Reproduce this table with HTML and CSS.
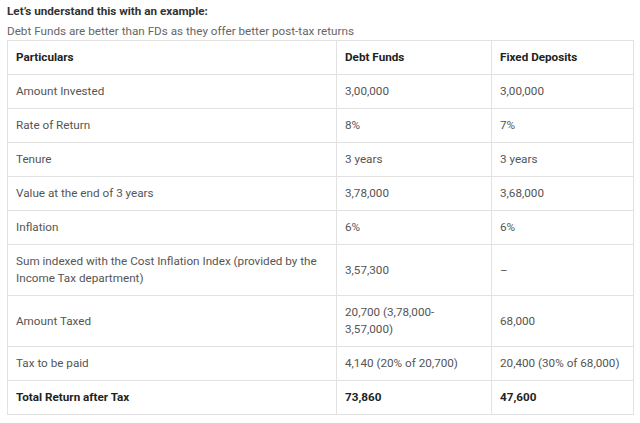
FILE: index.html
```html
<!DOCTYPE html>
<html>
<head>
<meta charset="utf-8">
<link rel="stylesheet" href="styles.css">
</head>
<body>
<div class="page">
  <p class="heading">Let’s understand this with an example:</p>
  <p class="sub">Debt Funds are better than FDs as they offer better post-tax returns</p>
  <table class="compare">
    <colgroup>
      <col class="c1"><col class="c2"><col class="c3">
    </colgroup>
    <tr class="head"><td>Particulars</td><td>Debt Funds</td><td>Fixed Deposits</td></tr>
    <tr><td>Amount Invested</td><td>3,00,000</td><td>3,00,000</td></tr>
    <tr><td>Rate of Return</td><td>8%</td><td>7%</td></tr>
    <tr><td>Tenure</td><td>3 years</td><td>3 years</td></tr>
    <tr><td>Value at the end of 3 years</td><td>3,78,000</td><td>3,68,000</td></tr>
    <tr><td>Inflation</td><td>6%</td><td>6%</td></tr>
    <tr><td>Sum indexed with the Cost Inflation Index (provided by the Income Tax department)</td><td>3,57,300</td><td>–</td></tr>
    <tr><td>Amount Taxed</td><td>20,700 (3,78,000-<br>3,57,000)</td><td>68,000</td></tr>
    <tr><td>Tax to be paid</td><td>4,140 (20% of 20,700)</td><td>20,400 (30% of 68,000)</td></tr>
    <tr class="head"><td>Total Return after Tax</td><td>73,860</td><td>47,600</td></tr>
  </table>
</div>
</body>
</html>
```
FILE: styles.css
```css
html, body {
  margin: 0;
  padding: 0;
  background: #ffffff;
}
.page {
  padding: 3px 7px 0 7px;
  font-family: Roboto, "Liberation Sans", sans-serif;
  font-size: 11.7px;
  line-height: 17px;
  color: #555555;
}
.heading {
  margin: 0;
  font-weight: bold;
  color: #333333;
}
.sub {
  margin: 3px 0 0 0;
  line-height: 17px;
  color: #666666;
}
.compare {
  border-collapse: collapse;
  width: 626px;
  table-layout: fixed;
}
.c1 { width: 329px; }
.c2 { width: 155px; }
.c3 { width: 142px; }
.compare td {
  border: 1px solid #e2e2e2;
  padding: 8px;
  vertical-align: middle;
}
.compare .head td {
  font-weight: bold;
  color: #222222;
}
```
